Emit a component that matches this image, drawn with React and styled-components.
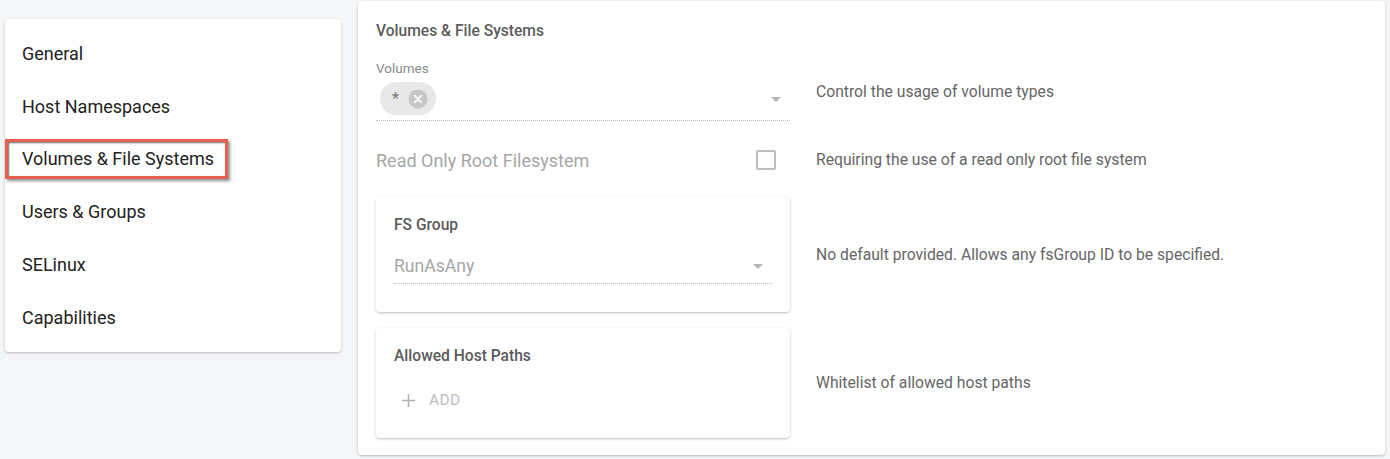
import React from "react";
import styled, {createGlobalStyle} from "styled-components";

const GlobalStyle = createGlobalStyle`
  html, body {
    margin: 0;
    padding: 0;
    background: #f5f6f8;
    font-family: Roboto, "Noto Sans", "Liberation Sans", sans-serif;
  }
`;

const Page = styled.div`
  display: flex;
  align-items: flex-start;
  gap: 17px;
  padding: 1px 5px 0 5px;
  height: 458px;
  box-sizing: border-box;
`;

const Menu = styled.nav`
  width: 336px;
  flex: 0 0 336px;
  margin-top: 18px;
  padding: 8px 0;
  background: #fff;
  border-radius: 4px;
  box-shadow: 0 1px 3px rgba(0, 0, 0, 0.2), 0 1px 1px rgba(0, 0, 0, 0.06);
`;

const MenuItem = styled.div`
  height: 52.8px;
  display: flex;
  align-items: center;
  padding-left: 17px;
  font-size: 18px;
  color: #222;
`;

const Highlight = styled.span`
  position: relative;
  line-height: 20px;

  &::after {
    content: "";
    position: absolute;
    left: -17px;
    right: -14px;
    top: -10px;
    bottom: -10px;
    border: 3px solid #e6604e;
    box-shadow: inset 1px 1px 2px rgba(0, 0, 0, 0.6), 2px 2px 3px rgba(0, 0, 0, 0.45);
  }
`;

const Panel = styled.section`
  flex: 1;
  background: #fff;
  border-radius: 4px;
  padding: 20px 18px 17px;
  box-shadow: 0 1px 3px rgba(0, 0, 0, 0.2), 0 1px 1px rgba(0, 0, 0, 0.06);
`;

const PanelTitle = styled.h2`
  margin: 0 0 19px;
  font-size: 15.6px;
  line-height: 20px;
  font-weight: 500;
  color: #5c5c5c;
`;

const Row = styled.div`
  display: grid;
  grid-template-columns: 414px 1fr;
  column-gap: 26px;
  align-items: center;
  margin-top: ${props => props.gap || 0}px;
`;

const Description = styled.div`
  font-size: 15.7px;
  line-height: 20px;
  color: #666;
  margin-top: ${props => props.shift || 0}px;
`;

const Field = styled.div`
  position: relative;
  border-bottom: 1px dotted #bdbdbd;
  padding-bottom: ${props => props.pad || 5}px;
`;

const FieldLabel = styled.div`
  font-size: 13.5px;
  line-height: 16px;
  color: #8a8a8a;
  margin-bottom: 6px;
`;

const Chip = styled.span`
  display: inline-flex;
  align-items: center;
  height: 33px;
  margin-left: 4px;
  padding: 0 8px 0 12px;
  gap: 9px;
  border-radius: 17px;
  background: #e8e8e8;
  font-size: 16px;
  color: #777;
`;

const Arrow = styled.span`
  position: absolute;
  right: 9px;
  top: ${props => props.top}px;
  width: 0;
  height: 0;
  border-left: 5px solid transparent;
  border-right: 5px solid transparent;
  border-top: 5px solid #b5b5b5;
`;

const CheckRow = styled.div`
  height: 40px;
  display: flex;
  align-items: center;
  justify-content: space-between;
  padding-right: 14px;
  font-size: 18px;
  color: #a6a6a6;
`;

const Checkbox = styled.span`
  width: 16px;
  height: 16px;
  border: 2px solid #bdbdbd;
  border-radius: 2px;
`;

const Card = styled.div`
  background: #fff;
  border-radius: 4px;
  padding: 18px 18px ${props => props.bottom}px;
  box-shadow: 0 1px 3px rgba(0, 0, 0, 0.2), 0 1px 1px rgba(0, 0, 0, 0.06);
`;

const CardTitle = styled.div`
  font-size: 15.6px;
  line-height: 20px;
  font-weight: 500;
  color: #5a5a5a;
  margin-bottom: ${props => props.space}px;
`;

const SelectValue = styled.div`
  font-size: 17.6px;
  line-height: 24px;
  color: #a6a6a6;
`;

const AddButton = styled.div`
  display: flex;
  align-items: center;
  gap: 13px;
  height: 36px;
  padding-left: 7px;
  font-size: 15.5px;
  color: #bdbdbd;
  letter-spacing: 0.3px;
`;

const ClearIcon = () => (
  <svg width="20" height="20" viewBox="0 0 24 24">
    <circle cx="12" cy="12" r="11.5" fill="#c6c6c6"/>
    <path d="M8 8l8 8M16 8l-8 8" stroke="#fff" strokeWidth="2.2" strokeLinecap="round"/>
  </svg>
);

const PlusIcon = () => (
  <svg width="15" height="15" viewBox="0 0 16 16">
    <path d="M8 1v14M1 8h14" stroke="#b0b0b0" strokeWidth="1.6"/>
  </svg>
);

const menu = ["General", "Host Namespaces", "Volumes & File Systems", "Users & Groups", "SELinux", "Capabilities"];

export default function App() {
  return (
    <>
      <GlobalStyle/>
      <Page>
        <Menu>
          {menu.map(item => (
            <MenuItem key={item}>
              {item === "Volumes & File Systems" ? <Highlight>{item}</Highlight> : item}
            </MenuItem>
          ))}
        </Menu>

        <Panel>
          <PanelTitle>Volumes &amp; File Systems</PanelTitle>

          <Row>
            <Field>
              <FieldLabel>Volumes</FieldLabel>
              <Chip>
                *
                <ClearIcon/>
              </Chip>
              <Arrow top={37}/>
            </Field>
            <Description shift={2}>Control the usage of volume types</Description>
          </Row>

          <Row gap={19}>
            <CheckRow>
              Read Only Root Filesystem
              <Checkbox/>
            </CheckRow>
            <Description>Requiring the use of a read only root file system</Description>
          </Row>

          <Row gap={17}>
            <Card bottom={28}>
              <CardTitle space={19}>FS Group</CardTitle>
              <Field pad={5}>
                <SelectValue>RunAsAny</SelectValue>
                <Arrow top={10}/>
              </Field>
            </Card>
            <Description>No default provided. Allows any fsGroup ID to be specified.</Description>
          </Row>

          <Row gap={16}>
            <Card bottom={20}>
              <CardTitle space={16}>Allowed Host Paths</CardTitle>
              <AddButton>
                <PlusIcon/>
                ADD
              </AddButton>
            </Card>
            <Description>Whitelist of allowed host paths</Description>
          </Row>
        </Panel>
      </Page>
    </>
  );
}
